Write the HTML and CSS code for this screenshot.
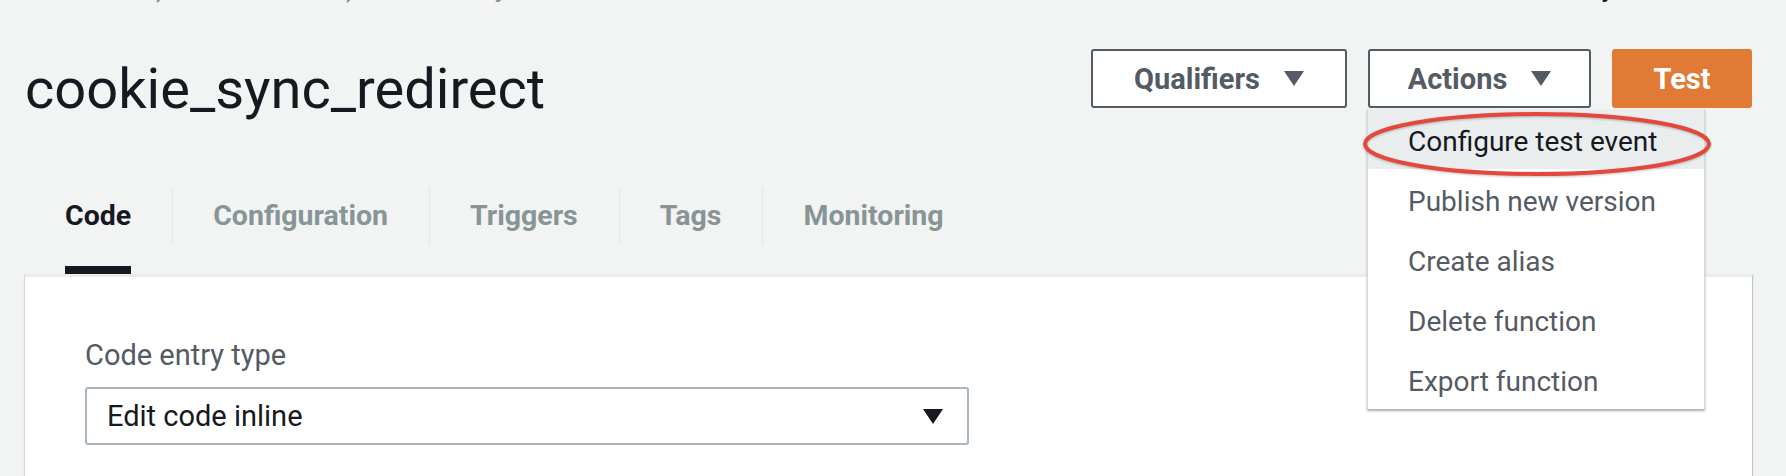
FILE: index.html
```html
<!DOCTYPE html>
<html lang="en">
<head>
<meta charset="utf-8">
<title>cookie_sync_redirect</title>
<link rel="stylesheet" href="styles.css">
</head>
<body>
<div class="page">
  <div class="crumbs">
    <div class="crumb-left">
      <span class="crumb">Lambda</span>
      <svg class="chev" viewBox="0 0 12 20" width="12" height="20"><polyline points="2,2 10,10 2,18" fill="none" stroke="#879596" stroke-width="2"/></svg>
      <span class="crumb">Functions</span>
      <svg class="chev" viewBox="0 0 12 20" width="12" height="20"><polyline points="2,2 10,10 2,18" fill="none" stroke="#879596" stroke-width="2"/></svg>
      <span class="crumb">cookie_sync_redirect</span>
    </div>
    <div class="arn">ARN - arn:aws:lambda:us-east-1:123456789012:function:cookie_sync_redirect</div>
  </div>

  <div class="header">
    <h1 class="title">cookie_sync_redirect</h1>
    <div class="actions">
      <button class="btn btn-qual">Qualifiers <span class="caret"></span></button>
      <div class="dropdown">
        <button class="btn btn-actions">Actions <span class="caret"></span></button>
        <ul class="menu">
          <li class="menu-item menu-item-active">Configure test event</li>
          <li class="menu-item">Publish new version</li>
          <li class="menu-item">Create alias</li>
          <li class="menu-item">Delete function</li>
          <li class="menu-item">Export function</li>
        </ul>
        <svg class="ring" viewBox="0 0 352 68" width="352" height="68">
          <ellipse cx="176" cy="34" rx="172" ry="30" fill="none" stroke="#e4473b" stroke-width="4"/>
        </svg>
      </div>
      <button class="btn btn-test">Test</button>
    </div>
  </div>

  <div class="tabs">
    <div class="tab tab-active">Code</div>
    <div class="tab">Configuration</div>
    <div class="tab">Triggers</div>
    <div class="tab">Tags</div>
    <div class="tab tab-last">Monitoring</div>
  </div>

  <div class="panel">
    <div class="field-label">Code entry type</div>
    <div class="select">
      <span class="select-value">Edit code inline</span>
      <span class="caret caret-dark"></span>
    </div>
  </div>
</div>
</body>
</html>
```

FILE: styles.css
```css
html, body {
  margin: 0;
  padding: 0;
  background: #f2f3f3;
  overflow: hidden;
}

body {
  font-family: Roboto, "Noto Sans", "Liberation Sans", sans-serif;
  color: #16191f;
  width: 1786px;
  height: 476px;
}

.page {
  padding: 0 34px 0 25px;
}

/* breadcrumbs, mostly scrolled out of view */
.crumbs {
  display: flex;
  justify-content: space-between;
  height: 34px;
  margin-top: -30px;
  font-size: 28px;
  line-height: 34px;
}

.crumb-left {
  display: flex;
  align-items: center;
  gap: 28px;
  color: #879596;
}

.chev {
  display: block;
  margin-top: 14px;
}

.arn {
  color: #16191f;
}

/* header */
.header {
  display: flex;
  align-items: flex-start;
  padding-top: 45px;
}

.title {
  margin: 8px 0 0 0;
  font-size: 56px;
  line-height: 64px;
  font-weight: 400;
  color: #16191f;
}

.actions {
  margin-left: auto;
  display: flex;
  gap: 21px;
}

.btn {
  font-family: Roboto, "Noto Sans", "Liberation Sans", sans-serif;
  font-weight: 700;
  font-size: 29px;
  color: #545b64;
  background: #ffffff;
  border: 2px solid #545b64;
  border-radius: 3px;
  height: 59px;
  padding: 0;
  display: flex;
  align-items: center;
  justify-content: center;
  gap: 24px;
  box-sizing: border-box;
}

.btn-qual { width: 256px; }
.btn-actions { width: 223px; }

.btn-test {
  width: 140px;
  background: #e07a34;
  border-color: #e07a34;
  color: #ffffff;
}

.caret {
  display: block;
  width: 0;
  height: 0;
  border-left: 10px solid transparent;
  border-right: 10px solid transparent;
  border-top: 15px solid #545b64;
}

.caret-dark {
  border-top-color: #16191f;
}

/* dropdown */
.dropdown {
  position: relative;
}

.menu {
  position: absolute;
  top: calc(100% + 1px);
  left: -1px;
  width: 338px;
  margin: 0;
  padding: 0;
  list-style: none;
  background: #ffffff;
  border-left: 1px solid #d5dbdb;
  border-right: 1px solid #d5dbdb;
  box-sizing: border-box;
  box-shadow: 0 2px 2px 0 rgba(0, 28, 36, 0.35);
  z-index: 5;
}

.menu-item {
  height: 60px;
  box-sizing: border-box;
  padding: 5px 0 0 40px;
  line-height: 55px;
  font-size: 28px;
  color: #545b64;
  white-space: nowrap;
}

.menu-item-active {
  background: #eaeded;
  color: #16191f;
}

.ring {
  position: absolute;
  left: -7px;
  top: 61px;
  z-index: 6;
  filter: drop-shadow(0 1px 1px rgba(0, 0, 0, 0.25));
}

/* tabs */
.tabs {
  display: flex;
  margin-top: 66px;
}

.tab {
  position: relative;
  height: 58px;
  line-height: 58px;
  padding: 0 41px 0 40px;
  font-size: 28.5px;
  font-weight: 700;
  color: #879596;
  border-right: 1px solid #e3e6e6;
}

.tab-last {
  border-right: none;
}

.tab-active {
  color: #16191f;
}

.tab-active::after {
  content: "";
  position: absolute;
  left: 40px;
  right: 41px;
  top: 79px;
  height: 8px;
  background: #16191f;
}

/* panel */
.panel {
  margin-top: 29px;
  background: #ffffff;
  border-top: 3px solid #eaeded;
  box-shadow: 1px 1px 1px 0 rgba(0, 28, 36, 0.2), -1px 1px 1px 0 rgba(0, 28, 36, 0.12);
  padding: 61px 60px 60px 60px;
  height: 200px;
}

.field-label {
  font-size: 29px;
  line-height: 34px;
  color: #545b64;
}

.select {
  margin-top: 15px;
  width: 884px;
  height: 58px;
  box-sizing: border-box;
  border: 2px solid #aab7b8;
  border-radius: 3px;
  display: flex;
  align-items: center;
  justify-content: space-between;
  padding: 0 24px 0 20px;
}

.select-value {
  font-size: 29px;
  color: #16191f;
}
```
